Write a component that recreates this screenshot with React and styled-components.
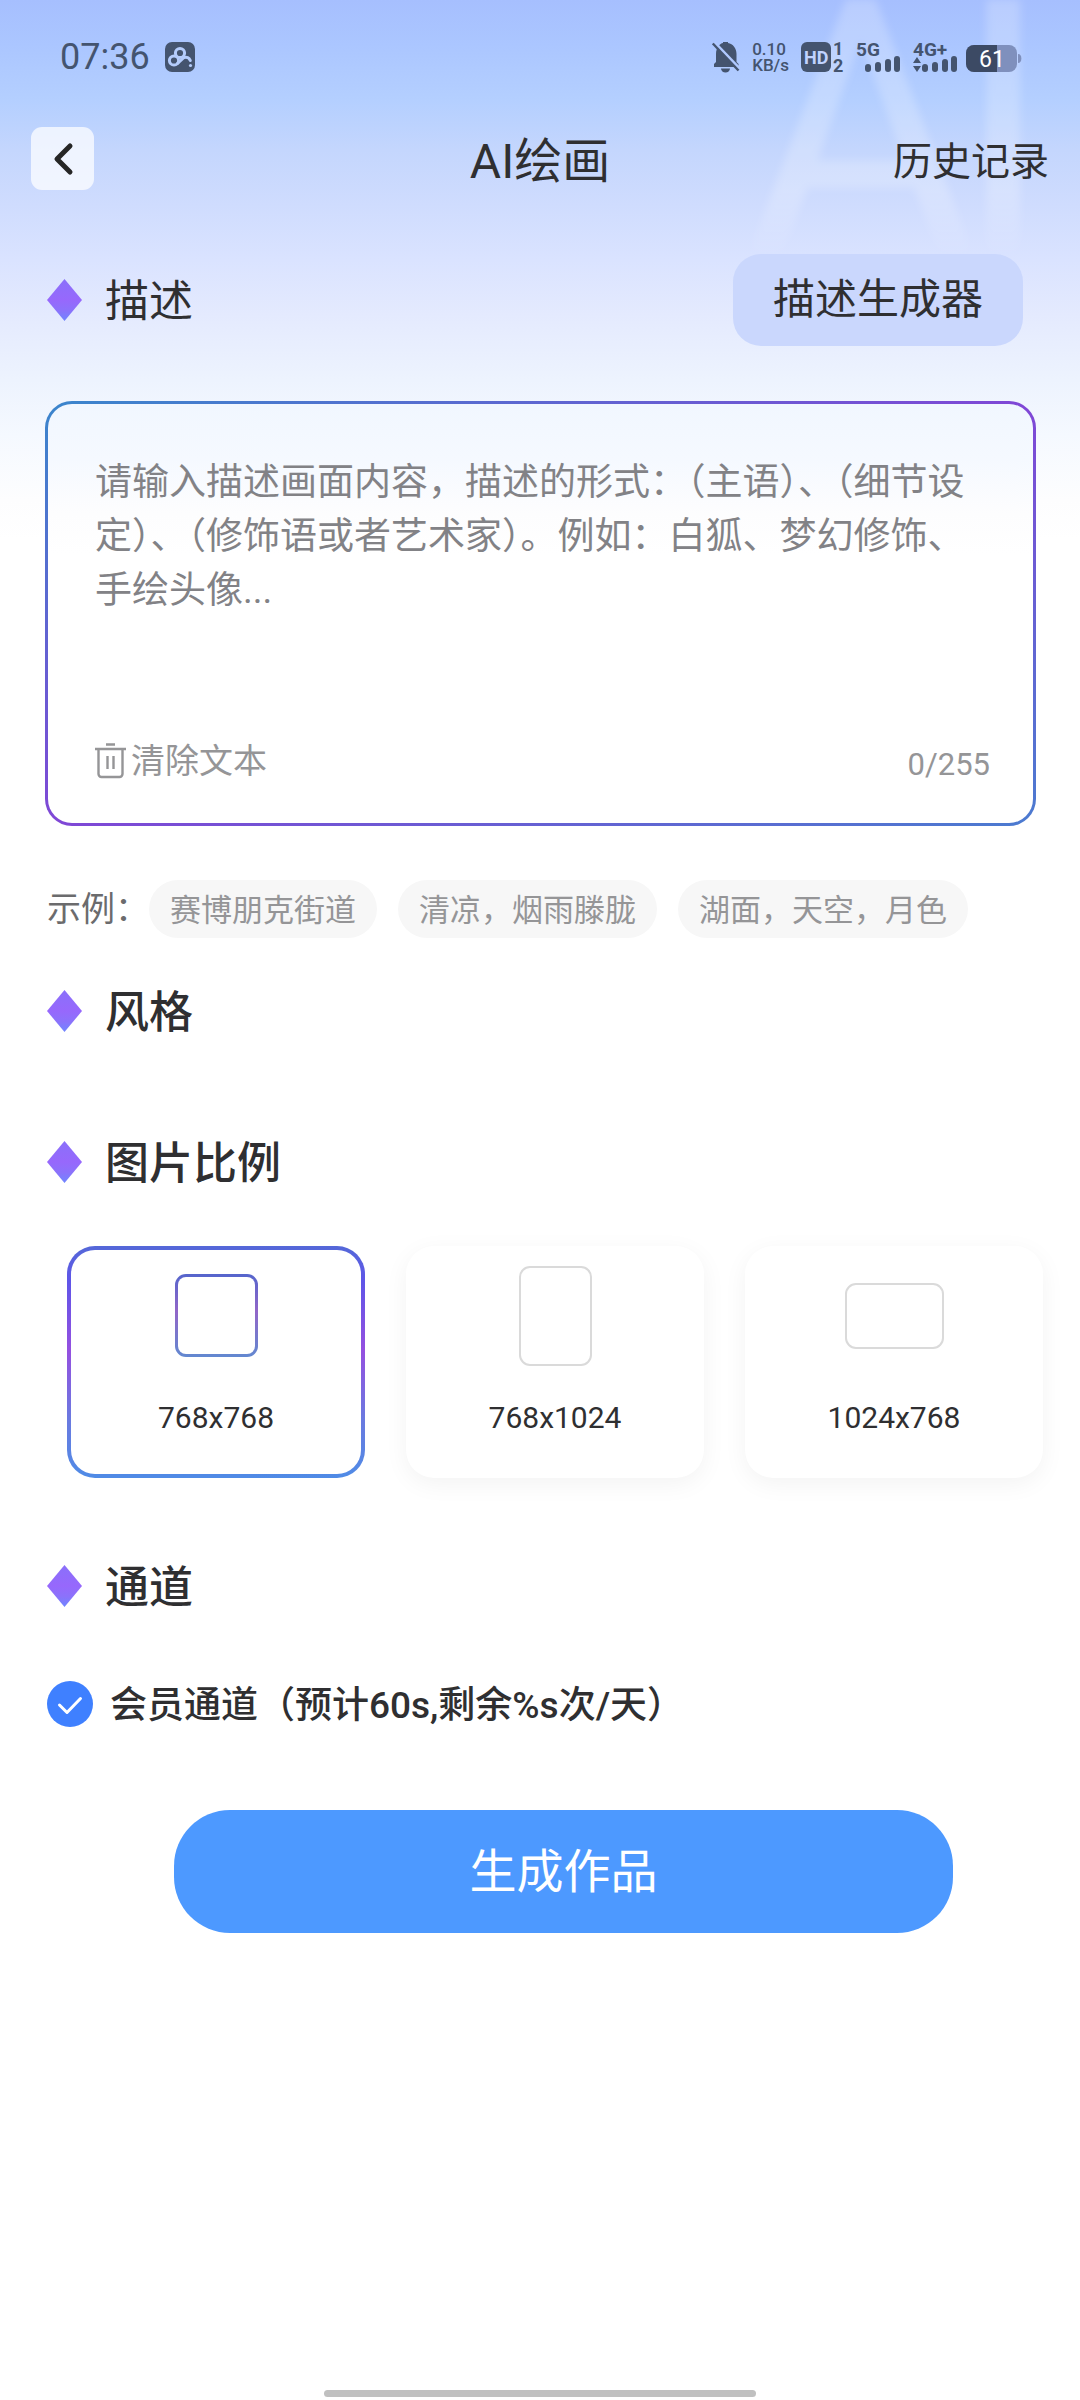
import React, { useState } from "react";
import styled, { createGlobalStyle } from "styled-components";

const GlobalStyle = createGlobalStyle`
  * { box-sizing: border-box; }
  body {
    margin: 0;
    background: #fff;
    color: #2f2f31;
    font-family: Roboto, "Noto Sans CJK SC", sans-serif;
  }
  button, textarea, input { font: inherit; color: inherit; }
  button { border: 0; padding: 0; background: none; cursor: pointer; }
  p, h1, h2 { margin: 0; font-weight: 400; }
  svg { overflow: visible; }
`;

const Page = styled.div`
  position: relative;
  overflow: hidden;
  display: flex;
  flex-direction: column;
  min-height: 100vh;
  background: linear-gradient(
    180deg,
    #a6bffe 0,
    #abc6ff 45px,
    #b4cfff 100px,
    #c4d6fd 150px,
    #cfdcfe 205px,
    #dae3ff 260px,
    #e4eafe 315px,
    #edf3fe 380px,
    #f5f9ff 435px,
    #fdfdfe 500px,
    #ffffff 540px
  );
`;

const Watermark = styled.div`
  position: absolute;
  top: -48px;
  right: 28px;
  display: flex;
  gap: 0;
  font-size: 360px;
  line-height: 1;
  color: rgba(255, 255, 255, 0.22);
  filter: blur(4px);
  mask-image: linear-gradient(180deg, #000 240px, transparent 310px);
  pointer-events: none;
  span + span { margin-left: -24px; }
`;

const StatusBar = styled.header`
  position: relative;
  display: flex;
  align-items: center;
  justify-content: space-between;
  height: 114px;
  padding: 0 60px;
  color: #44546f;
`;

const StatusGroup = styled.div`
  display: flex;
  align-items: center;
  gap: ${(p) => p.$gap}px;
`;

const Clock = styled.span`
  font-size: 36px;
  line-height: 42px;
`;

const NetSpeed = styled.span`
  display: flex;
  flex-direction: column;
  font-size: 17px;
  font-weight: 500;
  line-height: 16px;
`;

const NavBar = styled.nav`
  position: relative;
  display: grid;
  grid-template-columns: 1fr auto 1fr;
  align-items: center;
  height: 89px;
  padding: 0 31px;
`;

const BackButton = styled.button`
  display: flex;
  align-items: center;
  justify-content: center;
  width: 63px;
  height: 63px;
  border-radius: 11px;
  background: rgba(255, 255, 255, 0.72);
`;

const Title = styled.h1`
  padding-top: 6px;
  font-size: 48px;
  line-height: 56px;
`;

const HistoryLink = styled.a`
  justify-self: end;
  padding-top: 6px;
  color: inherit;
  font-size: 39px;
  line-height: 56px;
  text-decoration: none;
`;

const Main = styled.main`
  position: relative;
  display: flex;
  flex-direction: column;
`;

const SectionHead = styled.div`
  display: flex;
  align-items: center;
  justify-content: space-between;
  height: 92px;
  padding: 0 57px 0 47px;
  margin-top: ${(p) => p.$top || 0}px;
`;

const SectionTitle = styled.h2`
  display: flex;
  align-items: center;
  gap: 23px;
  font-size: 44px;
  line-height: 64px;
  font-weight: ${(p) => (p.$strong ? 500 : 400)};
`;

const Label = styled.span`
  padding-top: 4px;
`;

const GeneratorButton = styled.button`
  height: 92px;
  padding: 0 40px;
  border-radius: 28px;
  background: #cad7fd;
  font-size: 42px;
  line-height: 60px;
`;

const Prompt = styled.section`
  display: flex;
  flex-direction: column;
  justify-content: space-between;
  min-height: 425px;
  margin: 55px 44px 0 45px;
  padding: 52px 42px 34px 47px;
  border: 3px solid transparent;
  border-radius: 27px;
  background:
    linear-gradient(180deg, #f1f7ff 0, #f5f9ff 55px, #fdfdfe 110px, #ffffff 150px) padding-box,
    linear-gradient(to bottom right, #3a86cc, #8047d6 50%, #4b7bd0) border-box;
`;

const PromptInput = styled.textarea`
  display: block;
  width: 100%;
  height: 216px;
  padding: 0;
  border: 0;
  outline: 0;
  resize: none;
  overflow: hidden;
  background: transparent;
  font-size: 37px;
  line-height: 54px;
  &::placeholder { color: #828286; opacity: 1; }
`;

const PromptFoot = styled.div`
  display: flex;
  align-items: center;
  justify-content: space-between;
  color: #959597;
`;

const ClearButton = styled.button`
  display: flex;
  align-items: center;
  gap: 5px;
  font-size: 34px;
  line-height: 56px;
`;

const Counter = styled.span`
  padding: 8px 1px 0 0;
  font-size: 31px;
  line-height: 36px;
`;

const Examples = styled.div`
  display: flex;
  align-items: center;
  gap: 21px;
  margin-top: 54px;
  padding: 0 47px;
`;

const ExamplesLabel = styled.span`
  width: 81px;
  font-size: 34px;
  line-height: 58px;
  color: #6b6b6d;
  white-space: nowrap;
`;

const Chip = styled.button`
  height: 58px;
  padding: 3px 21px 0;
  border-radius: 29px;
  background: #f7f7f7;
  color: #959597;
  font-size: 31px;
  line-height: 55px;
  white-space: nowrap;
`;

const RatioList = styled.div`
  display: grid;
  grid-template-columns: repeat(3, 1fr);
  gap: 41px;
  margin-top: 38px;
  padding: 0 37px 0 67px;
`;

const RatioCard = styled.label`
  display: flex;
  flex-direction: column;
  align-items: center;
  height: 232px;
  padding: 15px 0 0;
  border: 4px solid transparent;
  border-radius: 28px;
  background: ${(p) =>
    p.$active
      ? "linear-gradient(#fff, #fff) padding-box, linear-gradient(180deg, #5468d8, #5f55e8 15%, #9450e0 45%, #6a7ae0 75%, #4f8be6) border-box"
      : "#fff"};
  box-shadow: ${(p) => (p.$active ? "none" : "0 6px 24px rgba(0, 0, 0, 0.05)")};
  font-size: 30px;
  cursor: pointer;
`;

const HiddenInput = styled.input`
  position: absolute;
  opacity: 0;
  pointer-events: none;
`;

const ShapeSlot = styled.span`
  display: flex;
  align-items: center;
  height: 101px;
`;

const Shape = styled.span`
  width: ${(p) => p.$w}px;
  height: ${(p) => p.$h}px;
  border: ${(p) => (p.$active ? "3px solid transparent" : "2px solid #dadada")};
  border-radius: 11px;
  background: ${(p) =>
    p.$active
      ? "linear-gradient(#fff, #fff) padding-box, linear-gradient(180deg, #5565cc, #9166c8 45%, #6288d0) border-box"
      : "#fff"};
`;

const RatioText = styled.span`
  margin-top: 32px;
  line-height: 40px;
`;

const Channel = styled.label`
  display: flex;
  align-items: center;
  gap: 17px;
  margin-top: 43px;
  padding: 0 47px;
  font-size: 37px;
  font-weight: 500;
  line-height: 54px;
  cursor: pointer;
`;

const Submit = styled.button`
  height: 123px;
  margin: 77px 127px 0 174px;
  border-radius: 56px;
  background: #4d99ff;
  color: #fff;
  font-size: 47px;
  line-height: 68px;
`;

const HomeBar = styled.div`
  width: 40%;
  height: 7px;
  margin: auto auto 3px;
  border-radius: 4px;
  background: #c0c0c0;
`;

const AppGlyph = () => (
  <svg width="30" height="30" viewBox="0 0 30 30">
    <rect width="30" height="30" rx="7" fill="#44546f" />
    <g fill="none" stroke="#b4ccfc" strokeWidth="3">
      <circle cx="15" cy="11" r="4.6" />
      <circle cx="9" cy="18.5" r="4.6" />
      <path d="M12.5 21.5 19 15.5a5 5 0 0 1 6.3 3" strokeLinecap="round" />
    </g>
    <circle cx="25.5" cy="23.5" r="1.6" fill="#b4ccfc" />
  </svg>
);

const BellOff = () => (
  <svg width="28" height="32" viewBox="0 0 28 32">
    <path d="M2 26v-3l2-2v-8C4 7 8 2.500 11 2V1h5v1c5 1 8.500 5 8.500 11v8l2 2v3z" fill="#44546f" />
    <path d="M9 27.500h9a4.500 4 0 0 1-9 0z" fill="#44546f" />
    <path d="M2.500 1.500 28 28" stroke="#b0c9ff" strokeWidth="3" />
    <path d="M.8 2.500 26.500 29.500" stroke="#44546f" strokeWidth="2.400" />
  </svg>
);

const StatusText = styled.text`
  font-family: Roboto, sans-serif;
  font-weight: 700;
  font-size: ${(p) => p.$size}px;
  fill: ${(p) => p.$fill || "#44546f"};
`;

const HdIcon = () => (
  <svg width="43" height="30" viewBox="0 0 43 30">
    <rect width="30" height="30" rx="6" fill="#44546f" />
    <StatusText x="3" y="21.500" $size={18} $fill="#c0d3ff">HD</StatusText>
    <StatusText x="32" y="13" $size={18}>1</StatusText>
    <StatusText x="32" y="30" $size={18}>2</StatusText>
  </svg>
);

const Bars = ({ x }) => (
  <g fill="#44546f">
    <rect x={x} y="22" width="6" height="8" rx="3" />
    <rect x={x + 10} y="20" width="6" height="10" rx="3" />
    <rect x={x + 20} y="17" width="6" height="13" rx="3" />
    <rect x={x + 29} y="14" width="6" height="16" rx="3" />
  </g>
);

const Signal5G = () => (
  <svg width="45" height="30" viewBox="0 0 45 30">
    <StatusText x="0" y="14" $size={19}>5G</StatusText>
    <Bars x={9} />
  </svg>
);

const Signal4G = () => (
  <svg width="41" height="30" viewBox="0 0 41 30">
    <StatusText x="0" y="14" $size={19}>4G+</StatusText>
    <path d="M0 21 4 15l4 6zM0 24l4 6 4-6z" fill="#44546f" />
    <Bars x={9} />
  </svg>
);

const Battery = () => (
  <svg width="54" height="30" viewBox="0 0 54 30">
    <rect y="3" width="51" height="27" rx="8" fill="#7f90bd" />
    <path d="M8 3h23v27H8a8 8 0 0 1-8-8V11a8 8 0 0 1 8-8z" fill="#3c4a64" />
    <path d="M52 12a3 4 0 0 1 0 9z" fill="#7f90bd" />
    <text x="13" y="25" fontFamily="Roboto" fontSize="23" fill="#fff">61</text>
  </svg>
);

const Chevron = () => (
  <svg width="22" height="34" viewBox="0 0 22 34">
    <path d="M18 4 5 17l13 13" fill="none" stroke="#262626" strokeWidth="5" strokeLinecap="round" strokeLinejoin="round" />
  </svg>
);

const Diamond = () => (
  <svg width="35" height="42" viewBox="0 0 35 42">
    <defs>
      <linearGradient id="gem" x1="0" y1="0" x2="0" y2="1">
        <stop offset="0" stopColor="#8a70fa" />
        <stop offset="0.5" stopColor="#9768fc" />
        <stop offset="0.75" stopColor="#8b72fb" />
        <stop offset="1" stopColor="#6f86ff" />
      </linearGradient>
    </defs>
    <path d="M17.500 0 35 21 17.500 42 0 21z" fill="url(#gem)" />
  </svg>
);

const Trash = () => (
  <svg width="31" height="36" viewBox="0 0 31 36" fill="none" stroke="#959597" strokeWidth="2.400">
    <path d="M11 1.500h9M0 6h31M3.500 6v25a3 3 0 0 0 3 3h18a3 3 0 0 0 3-3V6M12.500 13v13M18.500 13v13" />
  </svg>
);

const CheckMark = ({ on }) => (
  <svg width="46" height="46" viewBox="0 0 46 46">
    <circle cx="23" cy="23" r="23" fill={on ? "#3f80ff" : "#d5d5d5"} />
    <path d="m12.500 24 7.500 7.500L33.500 17.500" fill="none" stroke="#fff" strokeWidth="3" strokeLinecap="round" strokeLinejoin="round" />
  </svg>
);

const examples = ["赛博朋克街道", "清凉，烟雨滕胧", "湖面，天空，月色"];

const ratios = [
  { label: "768x768", w: 83, h: 83 },
  { label: "768x1024", w: 73, h: 100 },
  { label: "1024x768", w: 99, h: 66 },
];

export default function App() {
  const [prompt, setPrompt] = useState("");
  const [ratio, setRatio] = useState("768x768");
  const [member, setMember] = useState(true);

  return (
    <Page>
      <GlobalStyle />
      <Watermark aria-hidden="true">
        <span>A</span>
        <span>I</span>
      </Watermark>

      <StatusBar>
        <StatusGroup $gap={15}>
          <Clock>07:36</Clock>
          <AppGlyph />
        </StatusGroup>
        <StatusGroup $gap={12}>
          <BellOff />
          <NetSpeed>
            <span>0.10</span>
            <span>KB/s</span>
          </NetSpeed>
          <HdIcon />
          <Signal5G />
          <Signal4G />
          <Battery />
        </StatusGroup>
      </StatusBar>

      <NavBar>
        <BackButton aria-label="返回">
          <Chevron />
        </BackButton>
        <Title>AI绘画</Title>
        <HistoryLink href="#history">历史记录</HistoryLink>
      </NavBar>

      <Main>
        <SectionHead $top={51}>
          <SectionTitle>
            <Diamond />
            <Label>描述</Label>
          </SectionTitle>
          <GeneratorButton>描述生成器</GeneratorButton>
        </SectionHead>

        <Prompt>
          <PromptInput
            aria-label="描述"
            maxLength={255}
            value={prompt}
            onChange={(e) => setPrompt(e.target.value)}
            placeholder="请输入描述画面内容，描述的形式：（主语）、（细节设定）、（修饰语或者艺术家）。例如：白狐、梦幻修饰、手绘头像..."
          />
          <PromptFoot>
            <ClearButton onClick={() => setPrompt("")}>
              <Trash />
              清除文本
            </ClearButton>
            <Counter>{prompt.length}/255</Counter>
          </PromptFoot>
        </Prompt>

        <Examples>
          <ExamplesLabel>示例：</ExamplesLabel>
          {examples.map((text) => (
            <Chip key={text} onClick={() => setPrompt(text)}>
              {text}
            </Chip>
          ))}
        </Examples>

        <SectionHead $top={27}>
          <SectionTitle $strong>
            <Diamond />
            <Label>风格</Label>
          </SectionTitle>
        </SectionHead>

        <SectionHead $top={59}>
          <SectionTitle $strong>
            <Diamond />
            <Label>图片比例</Label>
          </SectionTitle>
        </SectionHead>

        <RatioList role="radiogroup" aria-label="图片比例">
          {ratios.map(({ label, w, h }) => (
            <RatioCard key={label} $active={ratio === label}>
              <HiddenInput
                type="radio"
                name="ratio"
                checked={ratio === label}
                onChange={() => setRatio(label)}
              />
              <ShapeSlot>
                <Shape $w={w} $h={h} $active={ratio === label} />
              </ShapeSlot>
              <RatioText>{label}</RatioText>
            </RatioCard>
          ))}
        </RatioList>

        <SectionHead $top={62}>
          <SectionTitle $strong>
            <Diamond />
            <Label>通道</Label>
          </SectionTitle>
        </SectionHead>

        <Channel>
          <HiddenInput
            type="checkbox"
            checked={member}
            onChange={(e) => setMember(e.target.checked)}
          />
          <CheckMark on={member} />
          <Label>会员通道（预计60s,剩余%s次/天）</Label>
        </Channel>

        <Submit>生成作品</Submit>
      </Main>

      <HomeBar />
    </Page>
  );
}
